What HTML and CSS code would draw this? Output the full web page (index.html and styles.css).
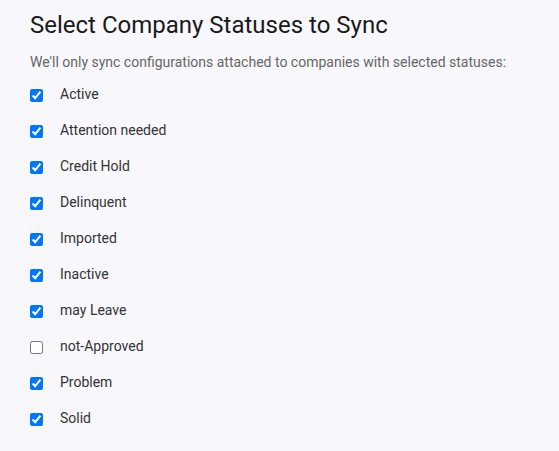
FILE: index.html
```html
<!DOCTYPE html>
<html lang="en">
<head>
    <meta charset="UTF-8">
    <title>Select Company Statuses to Sync</title>
    <link rel="stylesheet" href="styles.css">
</head>
<body>
    <div class="sync-panel">
        <h2>Select Company Statuses to Sync</h2>
        <p class="hint">We'll only sync configurations attached to companies with selected statuses:</p>
        <ul class="status-list">
            <li><label><input type="checkbox" checked> <span>Active</span></label></li>
            <li><label><input type="checkbox" checked> <span>Attention needed</span></label></li>
            <li><label><input type="checkbox" checked> <span>Credit Hold</span></label></li>
            <li><label><input type="checkbox" checked> <span>Delinquent</span></label></li>
            <li><label><input type="checkbox" checked> <span>Imported</span></label></li>
            <li><label><input type="checkbox" checked> <span>Inactive</span></label></li>
            <li><label><input type="checkbox" checked> <span>may Leave</span></label></li>
            <li><label><input type="checkbox"> <span>not-Approved</span></label></li>
            <li><label><input type="checkbox" checked> <span>Problem</span></label></li>
            <li><label><input type="checkbox" checked> <span>Solid</span></label></li>
        </ul>
    </div>
</body>
</html>
```

FILE: styles.css
```css
body {
    margin: 0;
    font-family: Roboto, "Liberation Sans", sans-serif;
    background-color: #f8f8fc;
    color: #333;
}
.sync-panel {
    padding: 9px 30px 0;
}
h2 {
    margin: 0;
    font-size: 24px;
    font-weight: 400;
    line-height: 32px;
    color: #1a1a1a;
}
.hint {
    margin: 11px 0 0;
    font-size: 14px;
    line-height: 20px;
    color: #666;
}
.status-list {
    list-style: none;
    margin: 5px 0 0;
    padding: 0;
}
.status-list li {
    height: 36px;
    display: flex;
    align-items: center;
}
.status-list label {
    display: flex;
    align-items: center;
    gap: 17px;
    font-size: 14px;
    color: #333;
}
.status-list label span {
    margin-bottom: 2px;
}
.status-list input {
    margin: 0;
    width: 13px;
    height: 13px;
}
```
